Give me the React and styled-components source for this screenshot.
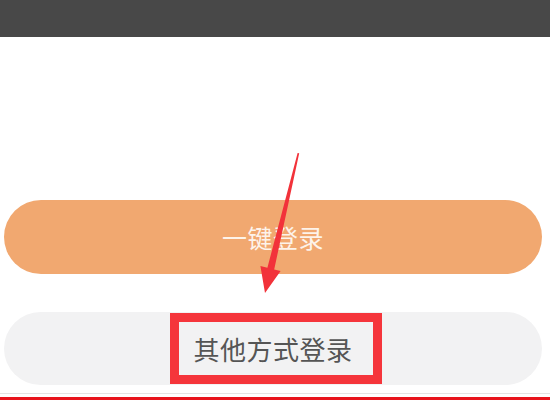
import styled, { createGlobalStyle } from "styled-components";

const GlobalStyle = createGlobalStyle`
  html, body {
    margin: 0;
    padding: 0;
    background: #ffffff;
  }
  body {
    font-family: "Noto Sans CJK SC", "Noto Sans", sans-serif;
  }
`;

const Page = styled.div`
  position: relative;
  width: 550px;
  height: 400px;
  overflow: hidden;
  display: flex;
  flex-direction: column;
  background: #ffffff;
`;

const TopBar = styled.div`
  height: 37px;
  background: #484848;
  flex-shrink: 0;
`;

const Actions = styled.div`
  display: flex;
  flex-direction: column;
  gap: 38px;
  padding: 163px 8px 0 4px;
`;

const LoginButton = styled.div`
  height: ${(p) => p.$h}px;
  border-radius: 37px;
  display: flex;
  align-items: center;
  justify-content: center;
  background: ${(p) => (p.$primary ? "#f1a870" : "#f2f2f3")};
  color: ${(p) => (p.$primary ? "#fdf3ea" : "#555555")};
  font-size: ${(p) => (p.$primary ? 25 : 26)}px;
  letter-spacing: 0.5px;
`;

const Highlight = styled.span`
  box-sizing: border-box;
  display: flex;
  align-items: center;
  justify-content: center;
  width: 212px;
  height: 71px;
  border: 9px solid #f5353b;
  margin-left: 6px;
  padding-right: 6px;
`;

const Footer = styled.div`
  margin-top: auto;
  border-top: 1px solid #e4e4e4;
  padding-top: 3px;
  &::after {
    content: "";
    display: block;
    height: 3px;
    background: #e8141c;
  }
`;

const Arrow = styled.svg`
  position: absolute;
  left: 0;
  top: 0;
  pointer-events: none;
`;

export default function App() {
  return (
    <>
      <GlobalStyle />
      <Page>
        <TopBar />
        <Actions>
          <LoginButton $primary $h={74}>一键登录</LoginButton>
          <LoginButton $h={73}>
            <Highlight>其他方式登录</Highlight>
          </LoginButton>
        </Actions>
        <Footer />
        <Arrow width="550" height="400" viewBox="0 0 550 400">
          <polygon
            fill="#f2323a"
            points="297.6,153 299.2,153.3 274.2,269.4 280.6,270.9 265,293 260.4,266.1 267.4,267.7"
          />
        </Arrow>
      </Page>
    </>
  );
}
